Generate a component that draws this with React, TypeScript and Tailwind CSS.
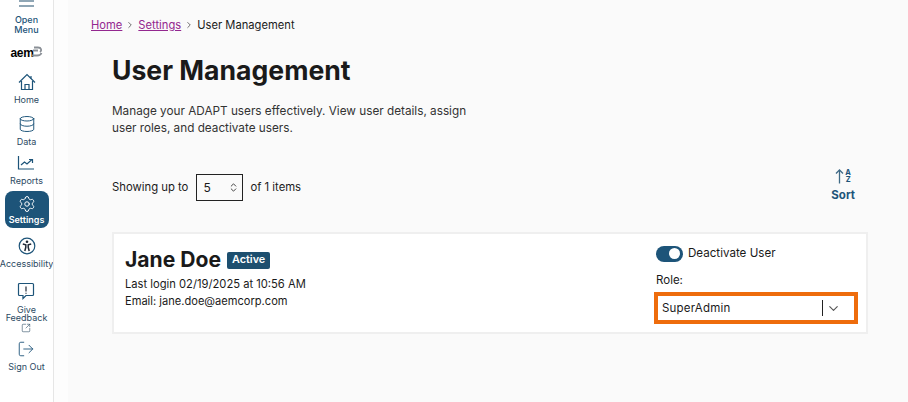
import { ChevronDown, ChevronsUpDown, Database, Settings, SquareArrowOutUpRight, LogOut, ChevronRight } from "lucide-react";
import type { ReactNode } from "react";

const font = { fontFamily: '"Inter", "Liberation Sans", sans-serif' };

function NavItem({ icon, label, active }: { icon: ReactNode; label: string; active?: boolean }) {
  return (
    <div
      className={
        active
          ? "flex h-[37px] w-[44px] flex-col items-center rounded-lg bg-[#1d5479] pt-[4px] text-white"
          : "flex flex-col items-center text-[#1d5479]"
      }
    >
      <div className="flex h-[18px] items-center justify-center">{icon}</div>
      <span
        className={
          active
            ? "mt-[1px] text-[9px] leading-[12px] font-semibold text-white"
            : "mt-[3px] text-[9px] leading-[12px] text-[#2b4a63]"
        }
      >
        {label}
      </span>
    </div>
  );
}

function HomeIcon() {
  return (
    <svg width="18" height="18" viewBox="0 0 18 18" fill="none" stroke="#1d5479" strokeWidth="1.2">
      <path d="M1 9.500 9 1.500l8 8" />
      <path d="M13 3v2.500" />
      <path d="M3.500 8v8.500h11V8" />
      <path d="M7 16.500v-5h4v5" />
    </svg>
  );
}

function ReportsIcon() {
  return (
    <svg width="18" height="16" viewBox="0 0 18 16" fill="none" stroke="#1d5479" strokeWidth="1.2">
      <path d="M1.500 1v13h15.500" />
      <path d="M4 10l3.500-3 2.500 2 5-4.500" />
      <path d="M12 4.500h3.500V8" />
    </svg>
  );
}

function FeedbackIcon() {
  return (
    <svg width="18" height="18" viewBox="0 0 18 18" fill="none" stroke="#1d5479" strokeWidth="1.2">
      <path d="M2.500 1.500h13a1 1 0 0 1 1 1v10a1 1 0 0 1-1 1H9l-3 3v-3H2.500a1 1 0 0 1-1-1v-10a1 1 0 0 1 1-1z" />
      <path d="M9 4.500v5M9 10.800v1" stroke="#1f2937" />
    </svg>
  );
}

function AccessIcon() {
  return (
    <svg width="18" height="18" viewBox="0 0 18 18" fill="none">
      <circle cx="9" cy="9" r="7.800" stroke="#1d5479" strokeWidth="1.200" />
      <circle cx="9" cy="4.800" r="1.300" fill="#1f2937" />
      <path d="M4.800 7l3 .8v2.500L6.800 14M13.200 7l-3 .8v2.500l1 3.700" stroke="#1f2937" strokeWidth="1.500" />
    </svg>
  );
}

function SortArrow() {
  return (
    <svg width="9" height="15" viewBox="0 0 9 15" fill="none" stroke="#3f6a86" strokeWidth="1.300">
      <path d="M4.500 14.500V1.500" />
      <path d="M1 4.500 4.500 1 8 4.500" />
    </svg>
  );
}

function Sidebar() {
  return (
    <aside className="flex h-[402px] w-[54px] shrink-0 flex-col items-center overflow-hidden border-r border-[#e6e6e6] bg-white">
      <div className="flex h-[7px] w-[15px] flex-col justify-between">
        <div className="h-[2px] w-full bg-[#8fa6b5]" />
        <div className="h-[2px] w-full bg-[#8fa6b5]" />
      </div>
      <div className="mt-[8px] text-center text-[9px] leading-[10px] font-medium text-[#1d5479]">
        Open
        <br />
        Menu
      </div>
      <div
        className="mt-[11px] flex h-[14px] items-center text-[12px] font-bold tracking-tight text-black"
        style={{ fontFamily: '"Liberation Sans", sans-serif' }}
      >
        aem
        <svg className="ml-[-3px] mt-[-3px]" width="12" height="12" viewBox="0 0 12 12" fill="none" stroke="#8a8f96" strokeWidth="1.800">
          <path d="M3 1.500h4c3.500 0 4 3 2 4.500M2 4.500h5M1 9.500h5c2 0 4-1 4.500-2.500" />
        </svg>
      </div>
      <div className="mt-[13px]">
        <NavItem icon={<HomeIcon />} label="Home" />
      </div>
      <div className="mt-[9px]">
        <NavItem icon={<Database size={18} strokeWidth={1.300} />} label="Data" />
      </div>
      <div className="mt-[6px]">
        <NavItem icon={<ReportsIcon />} label="Reports" />
      </div>
      <div className="mt-[4px]">
        <NavItem active icon={<Settings size={18} strokeWidth={1.300} />} label="Settings" />
      </div>
      <div className="mt-[9px]">
        <NavItem icon={<AccessIcon />} label="Accessibility" />
      </div>
      <div className="mt-[12px] flex flex-col items-center">
        <FeedbackIcon />
        <span className="mt-[6px] text-center text-[9px] leading-[8px] text-[#2b4a63]">
          Give
          <br />
          Feedback
        </span>
        <SquareArrowOutUpRight size={10} strokeWidth={1.400} className="mt-[1px] text-[#2b4a63]" />
      </div>
      <div className="mt-[7px]">
        <NavItem icon={<LogOut size={18} strokeWidth={1.200} />} label="Sign Out" />
      </div>
    </aside>
  );
}

export default function App() {
  return (
    <div className="flex h-[402px] w-[908px] overflow-hidden bg-[#fafafa] text-[#1a1a1a]" style={font}>
      <Sidebar />
      <div className="w-[14px] shrink-0 bg-[#fdfdfd]" />
      <main className="flex-1 pl-[23px]">
        <nav className="mt-[18px] flex h-[14px] items-center text-[11.200px] leading-[14px]">
          <a className="text-[#93278f] underline">Home</a>
          <ChevronRight size={10} className="mx-[3px] text-[#555]" />
          <a className="text-[#93278f] underline">Settings</a>
          <ChevronRight size={10} className="mx-[3px] text-[#555]" />
          <span>User Management</span>
        </nav>
        <div className="pl-[21px]">
          <h1 className="mt-[21px] text-[26.600px] leading-[34px] font-bold">User Management</h1>
          <p className="mt-[16px] w-[370px] text-[11.750px] leading-[17px] text-[#333]">
            Manage your ADAPT users effectively. View user details, assign user roles, and deactivate users.
          </p>
          <div className="mt-[30px] flex w-[756px] items-start justify-between">
            <div className="mt-[7px] flex items-center text-[11.300px]">
              <span>Showing up to</span>
              <div className="ml-[8px] mr-[7px] flex h-[27px] w-[47px] items-center justify-between border border-[#222] pl-[6px] pr-[3px] text-[12px]">
                5
                <ChevronsUpDown size={11} className="text-[#333]" />
              </div>
              <span>of 1 items</span>
            </div>
            <div className="mr-[13px] mt-[1px] flex flex-col items-center text-[#1d5479]">
              <div className="flex h-[16px] items-center gap-[1px]">
                <SortArrow />
                <div className="text-center text-[7.500px] leading-[7.500px] font-bold">
                  A
                  <br />Z
                </div>
              </div>
              <span className="mt-[5px] text-[11.500px] leading-[12px] font-bold">Sort</span>
            </div>
          </div>
          <section className="mt-[31px] flex h-[102px] w-[756px] justify-between border-2 border-[#efefef] bg-white pl-[11px] pr-[8px]">
            <div className="pt-[12px]">
              <div className="flex items-center">
                <span className="text-[21.100px] leading-[28px] font-bold">Jane Doe</span>
                <span className="ml-[6px] flex h-[17px] items-center rounded-[2px] bg-[#1d4f6f] px-[5px] text-[10.800px] font-semibold text-white">
                  Active
                </span>
              </div>
              <div className="mt-[2px] text-[11.200px] leading-[17px]">Last login 02/19/2025 at 10:56 AM</div>
              <div className="text-[11.100px] leading-[17px]">Email: jane.doe@aemcorp.com</div>
            </div>
            <div className="w-[204px] pt-[11px]">
              <div className="ml-[2px] flex items-center text-[11.600px]">
                <div className="mr-[5px] flex h-[16px] w-[27px] items-center justify-end rounded-full bg-[#1d5479] pr-[3px]">
                  <div className="h-[11px] w-[11px] rounded-full bg-white" />
                </div>
                Deactivate User
              </div>
              <div className="ml-[2px] mt-[11px] text-[11.500px] leading-[14px]">Role:</div>
              <div className="mt-[5px] flex h-[32px] items-center border-[4px] border-[#ee6c0c] bg-white pl-[4px] text-[11.500px]">
                <span className="flex-1 tracking-[0.2px]">SuperAdmin</span>
                <div className="h-[16px] w-[1px] bg-[#222]" />
                <ChevronDown size={15} strokeWidth={1.800} className="ml-[3px] mr-[13px] text-[#555]" />
              </div>
            </div>
          </section>
        </div>
      </main>
    </div>
  );
}
